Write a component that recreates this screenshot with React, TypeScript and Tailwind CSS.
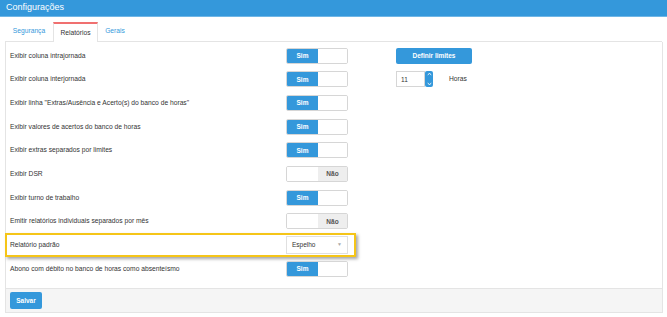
import React from 'react';

type Row = {
  label: string;
  kind: 'on' | 'off' | 'select';
  extra?: 'limits' | 'hours';
};

const rows: Row[] = [
  { label: 'Exibir coluna intrajornada', kind: 'on', extra: 'limits' },
  { label: 'Exibir coluna interjornada', kind: 'on', extra: 'hours' },
  { label: 'Exibir linha "Extras/Ausência e Acerto(s) do banco de horas"', kind: 'on' },
  { label: 'Exibir valores de acertos do banco de horas', kind: 'on' },
  { label: 'Exibir extras separados por limites', kind: 'on' },
  { label: 'Exibir DSR', kind: 'off' },
  { label: 'Exibir turno de trabalho', kind: 'on' },
  { label: 'Emitir relatórios individuais separados por mês', kind: 'off' },
  { label: 'Relatório padrão', kind: 'select' },
  { label: 'Abono com débito no banco de horas como absenteísmo', kind: 'on' },
];

const Toggle: React.FC<{ on: boolean }> = ({ on }) => (
  <div className="flex h-[16px] w-[62px] overflow-hidden rounded-[2px] border border-[#d6d6d6] bg-white">
    {on ? (
      <>
        <div className="flex w-[31px] items-center justify-center bg-[#3498db] text-[6.5px] font-bold text-white">Sim</div>
        <div className="flex-1 bg-white" />
      </>
    ) : (
      <>
        <div className="w-[31px] bg-white" />
        <div className="flex flex-1 items-center justify-center bg-[#eeeeee] text-[6.5px] font-bold text-[#555]">Não</div>
      </>
    )}
  </div>
);

const Extra: React.FC<{ kind?: Row['extra'] }> = ({ kind }) => {
  if (kind === 'limits') {
    return (
      <button className="ml-[48px] flex h-[16px] w-[76px] items-center justify-center rounded-[2px] bg-[#3498db] text-[6.5px] font-bold text-white">
        Definir limites
      </button>
    );
  }
  if (kind === 'hours') {
    return (
      <div className="ml-[48px] flex items-center">
        <div className="flex h-[16px] w-[29px] items-center border border-[#d6d6d6] bg-white pl-[4px] text-[6.5px] text-[#333]">11</div>
        <div className="flex h-[16px] w-[8px] flex-col items-center justify-between rounded-[2px] bg-[#3498db] py-[1px]">
          <svg width="5" height="4" viewBox="0 0 5 4"><path d="M0.8 3.2 L2.5 1 L4.2 3.2" stroke="#fff" strokeWidth="0.8" fill="none" /></svg>
          <svg width="5" height="4" viewBox="0 0 5 4"><path d="M0.8 0.8 L2.5 3 L4.2 0.8" stroke="#fff" strokeWidth="0.8" fill="none" /></svg>
        </div>
        <span className="ml-[16px] text-[6.7px] text-[#333]">Horas</span>
      </div>
    );
  }
  return null;
};

export default function App() {
  return (
    <div className="h-[317px] w-[667px] overflow-hidden bg-white font-['Liberation_Sans',Arial,sans-serif] text-[#333]">
      <header className="flex h-[17px] items-center border-b border-[#6fb6e6] bg-[#3498db] pl-[6px] text-[9px] text-white">
        Configurações
      </header>

      <div className="mt-[5px] px-[5px]">
        <nav className="flex h-[20px] border-b border-[#e4e4e4]">
          <div className="flex w-[48px] items-center justify-center text-[6.7px] text-[#3498db]">Segurança</div>
          <div className="-mb-px flex w-[45px] items-center justify-center border-x border-t-2 border-x-[#e4e4e4] border-t-[#f07070] bg-white text-[6.7px] text-[#333]">
            Relatórios
          </div>
          <div className="flex w-[34px] items-center justify-center text-[6.7px] text-[#3498db]">Gerais</div>
        </nav>

        <section className="flex h-[271px] w-[658px] flex-col border-x border-b border-[#e4e4e4]">
          <div className="flex-1 pt-[2px]">
            {rows.map((row) =>
              row.kind === 'select' ? (
                <div
                  key={row.label}
                  className="-ml-px flex h-[23.67px] w-[351px] items-center border-2 border-[#f5c518] pl-[3px] shadow-[2px_2px_3px_rgba(0,0,0,0.35)]"
                >
                  <span className="w-[276px] text-[6.7px]">{row.label}</span>
                  <div className="flex h-[18px] w-[62px] items-center justify-between border border-[#e0e0e0] bg-white px-[5px] text-[6.5px]">
                    <span>Espelho</span>
                    <span className="text-[5px] text-[#aaa]">▼</span>
                  </div>
                </div>
              ) : (
                <div key={row.label} className="flex h-[23.67px] items-center pl-[4px]">
                  <span className="w-[276px] text-[6.7px]">{row.label}</span>
                  <Toggle on={row.kind === 'on'} />
                  <Extra kind={row.extra} />
                </div>
              ),
            )}
          </div>
          <footer className="flex h-[24px] items-center border-t border-[#e4e4e4] bg-[#f5f5f5] pl-[4px]">
            <button className="flex h-[17px] w-[32px] items-center justify-center rounded-[2px] bg-[#3498db] text-[6.5px] font-bold text-white">
              Salvar
            </button>
          </footer>
        </section>
      </div>
    </div>
  );
}
